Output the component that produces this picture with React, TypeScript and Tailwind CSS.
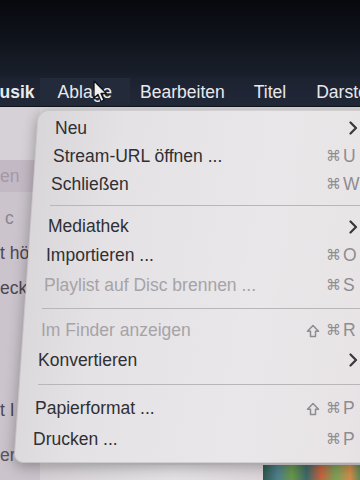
import React from 'react';

type Row =
  | { kind: 'item'; label: string; pl: string; h: string; dim?: boolean; mods?: string[]; keyChar?: string; sub?: boolean }
  | { kind: 'sep'; pl: string; h: string };

const ROWS: Row[] = [
  { kind: 'item', label: 'Neu', pl: 'pl-[55px]', h: 'h-[28px]', sub: true },
  { kind: 'item', label: 'Stream-URL öffnen ...', pl: 'pl-[53px]', h: 'h-[28px]', mods: ['⌘'], keyChar: 'U' },
  { kind: 'item', label: 'Schließen', pl: 'pl-[51px]', h: 'h-[28px]', mods: ['⌘'], keyChar: 'W' },
  { kind: 'sep', pl: 'pl-[50px]', h: 'h-[14px]' },
  { kind: 'item', label: 'Mediathek', pl: 'pl-[48px]', h: 'h-[29px]', sub: true },
  { kind: 'item', label: 'Importieren ...', pl: 'pl-[46px]', h: 'h-[29px]', mods: ['⌘'], keyChar: 'O' },
  { kind: 'item', label: 'Playlist auf Disc brennen ...', pl: 'pl-[44px]', h: 'h-[30px]', dim: true, mods: ['⌘'], keyChar: 'S' },
  { kind: 'sep', pl: 'pl-[42px]', h: 'h-[16px]' },
  { kind: 'item', label: 'Im Finder anzeigen', pl: 'pl-[41px]', h: 'h-[29px]', dim: true, mods: ['⇧', '⌘'], keyChar: 'R' },
  { kind: 'item', label: 'Konvertieren', pl: 'pl-[38px]', h: 'h-[30px]', sub: true },
  { kind: 'sep', pl: 'pl-[38px]', h: 'h-[19px]' },
  { kind: 'item', label: 'Papierformat ...', pl: 'pl-[35px]', h: 'h-[29px]', mods: ['⇧', '⌘'], keyChar: 'P' },
  { kind: 'item', label: 'Drucken ...', pl: 'pl-[33px]', h: 'h-[32px]', mods: ['⌘'], keyChar: 'P' },
];

function Chevron() {
  return (
    <svg width="9" height="14" viewBox="0 0 9 14" className="ml-[6px]">
      <polyline points="1.5,1.5 7,7 1.5,12.5" fill="none" stroke="#38373b" strokeWidth="2.2" strokeLinecap="round" strokeLinejoin="round" />
    </svg>
  );
}

function Shift() {
  return (
    <svg width="14" height="14" viewBox="0 0 14 14">
      <path d="M7 1.5 L12.5 7.2 L9.5 7.2 L9.5 12.5 L4.5 12.5 L4.5 7.2 L1.5 7.2 Z" fill="none" stroke="#8f8c91" strokeWidth="1.5" strokeLinejoin="round" />
    </svg>
  );
}

function Cursor() {
  return (
    <svg width="16" height="24" viewBox="0 0 16 24" className="absolute left-[93px] top-[80px]">
      <path d="M1 1 L1 18 L5 14.5 L8 21.5 L11 20.2 L8 13.5 L13.5 13.5 Z" fill="#f2f2f2" stroke="#111" strokeWidth="1.3" strokeLinejoin="round" />
    </svg>
  );
}

export default function App() {
  return (
    <div className="relative w-[360px] h-[480px] overflow-hidden flex flex-col font-['Liberation_Sans',Arial,sans-serif] bg-[#0a0d12]">
      {/* dark screen top */}
      <div className="h-[78px] flex-shrink-0 bg-[linear-gradient(180deg,#07090d_0%,#0e121a_45%,#1a202c_100%)]" />

      {/* menu bar */}
      <div className="h-[29px] flex-shrink-0 flex items-center bg-[linear-gradient(180deg,#1c2230,#212838)] text-[17.5px] text-[#e9e9ec] whitespace-nowrap border-b border-[#10141c]">
        <span className="ml-[-15px] font-bold">Musik</span>
        <span className="ml-[5px] px-[18px] h-full flex items-center bg-[#232a39]">Ablage</span>
        <span className="ml-[10px]">Bearbeiten</span>
        <span className="ml-[29px]">Titel</span>
        <span className="ml-[30px]">Darstellung</span>
      </div>

      {/* window behind */}
      <div className="flex-1 flex bg-[#dad8da]">
        <div className="w-[40px] flex-shrink-0 flex flex-col text-[17.5px] whitespace-nowrap bg-[#cbc4cc]">
          <div className="h-[53px] bg-[#d5d1d6]" />
          <div className="h-[32px] flex items-center bg-[#c3b9c4] text-[#a497a8]">en</div>
          <div className="h-[13px]" />
          <div className="h-[26px] flex items-center pl-[5px] text-[#8c8591]">c</div>
          <div className="h-[9px]" />
          <div className="h-[26px] flex items-center text-[#4c4752]">t hö</div>
          <div className="h-[9px]" />
          <div className="h-[26px] flex items-center text-[#4c4752]">eck</div>
          <div className="h-[96px]" />
          <div className="h-[26px] flex items-center text-[#4c4752]">t I</div>
          <div className="h-[19px]" />
          <div className="h-[26px] flex items-center text-[#5a5560]">er</div>
        </div>
        <div className="flex-1 flex flex-col">
          <div className="flex-1 bg-[#d9d7d9]" />
          <div className="h-[15px] flex">
            <div className="w-[223px] bg-[linear-gradient(90deg,#d6d1d6,#e4e2e4_60%,#ddd6db)]" />
            <div className="flex-1 bg-[linear-gradient(90deg,#2f5a4c,#4f7f8f_15%,#6a9848_30%,#3d6a6a_45%,#c8633f_60%,#79a35a_75%,#d28c4a_90%,#5f8a58)]" />
          </div>
        </div>
      </div>

      {/* open menu */}
      <div className="absolute left-0 top-[110px] w-[420px] h-[353px]">
        <div className="absolute top-0 bottom-0 left-[38px] w-[420px] origin-top-left skew-x-[-4deg] rounded-[10px] border border-[#00000018] bg-[linear-gradient(95deg,#d9d6d9_0%,#e4e2e4_20%,#e9e7e9_55%,#e8e4e6_80%,#dcd3d8_100%)] shadow-[0_4px_14px_rgba(0,0,0,0.3)]" />
        <div className="relative flex flex-col pt-[4px] text-[17.5px] whitespace-nowrap">
          {ROWS.map((r, i) =>
            r.kind === 'sep' ? (
              <div key={i} className={`${r.h} ${r.pl} flex items-center`}>
                <div className="h-[1px] flex-1 bg-[#b9b6ba]" />
              </div>
            ) : (
              <div key={i} className={`${r.h} ${r.pl} flex items-center`}>
                <span className={`flex-1 ${r.dim ? 'text-[#a6a3a8]' : 'text-[#302f33]'}`}>{r.label}</span>
                <div className="w-[60px] flex items-center justify-end gap-[6px] text-[15px] text-[#8f8c91] font-['DejaVu_Sans',sans-serif]">
                  {r.mods?.map((m, j) => (m === '⇧' ? <Shift key={j} /> : <span key={j}>{m}</span>))}
                </div>
                <div className="w-[79px] pl-[2px] flex items-center text-[#8f8c91]">
                  {r.sub ? <Chevron /> : r.keyChar}
                </div>
              </div>
            )
          )}
        </div>
      </div>

      <Cursor />
    </div>
  );
}
